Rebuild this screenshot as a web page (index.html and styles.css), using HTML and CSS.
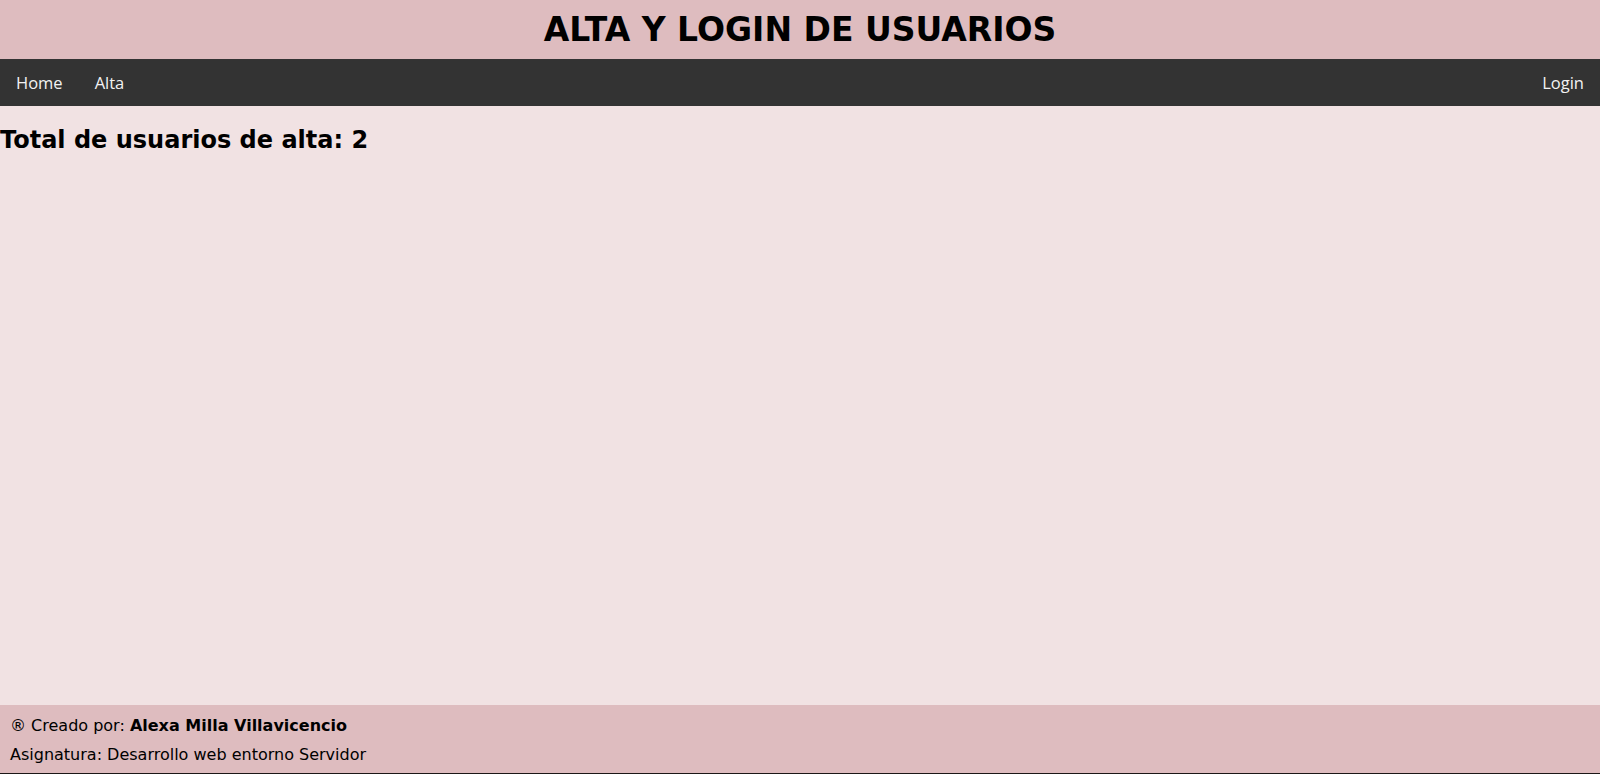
FILE: index.html
```html
<!DOCTYPE html>
<html lang="es">
<head>
<meta charset="utf-8">
<title>Alta y login de usuarios</title>
<link rel="stylesheet" href="styles.css">
</head>
<body>
<div class="page">
  <header class="site-header">
    <h1 class="site-title">ALTA Y LOGIN DE USUARIOS</h1>
  </header>
  <nav class="topnav">
    <div class="nav-left">
      <a class="nav-link" href="#">Home</a>
      <a class="nav-link" href="#">Alta</a>
    </div>
    <div class="nav-right">
      <a class="nav-link" href="#">Login</a>
    </div>
  </nav>
  <main class="content">
    <h2 class="total">Total de usuarios de alta: 2</h2>
  </main>
  <footer class="site-footer">
    <p class="foot-line">® Creado por: <strong>Alexa Milla Villavicencio</strong></p>
    <p class="foot-line">Asignatura: Desarrollo web entorno Servidor</p>
  </footer>
</div>
</body>
</html>
```

FILE: styles.css
```css
html, body {
  margin: 0;
  padding: 0;
}

body {
  background: #f1e2e3;
  font-family: "DejaVu Sans", Verdana, sans-serif;
  color: #000;
}

.page {
  display: flex;
  flex-direction: column;
  min-height: 100vh;
}

.site-header {
  background: #debcbf;
  height: 59px;
  display: flex;
  align-items: center;
  justify-content: center;
}

.site-title {
  margin: 0;
  font-size: 33px;
  font-weight: bold;
  line-height: 1;
}

.topnav {
  background: #333333;
  height: 47px;
  display: flex;
  justify-content: space-between;
  align-items: center;
}

.nav-left,
.nav-right {
  display: flex;
}

.nav-link {
  color: #f2f2f2;
  text-decoration: none;
  font-family: "Open Sans", "Noto Sans", sans-serif;
  font-size: 16.5px;
  padding: 0 16px;
}

.content {
  flex: 1;
}

.total {
  margin: 20px 0 0 0;
  font-size: 24px;
  font-weight: bold;
}

.site-footer {
  background: #debcbf;
  height: 69px;
  border-bottom: 1px solid #1b1616;
  padding: 10px 10px 0;
  box-sizing: border-box;
}

.foot-line {
  margin: 0 0 8px 0;
  font-size: 16px;
  line-height: 21px;
}
```
